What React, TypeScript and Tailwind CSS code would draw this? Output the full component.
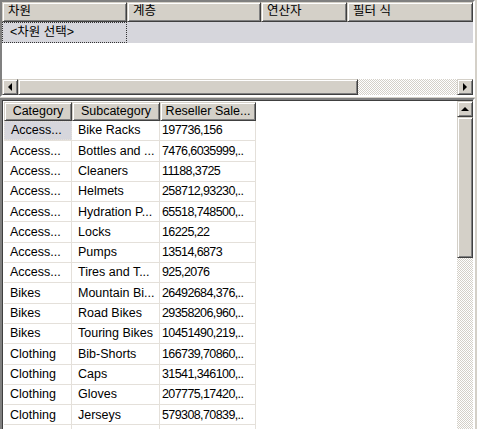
import React from 'react';

const raised =
  'border border-t-[#d4d0c8] border-l-[#d4d0c8] border-r-[#404040] border-b-[#404040] shadow-[inset_1px_1px_0_#ffffff,inset_-1px_-1px_0_#808080] bg-[#d4d0c8]';
const sunken =
  'border-2 border-t-[#808080] border-l-[#808080] border-r-[#ffffff] border-b-[#ffffff]';
const track =
  'bg-[repeating-conic-gradient(#d4d0c8_0_25%,#ffffff_0_50%)] [background-size:2px_2px]';

type Dir = 'left' | 'right' | 'up';

function Arrow({ dir }: { dir: Dir }) {
  const pts =
    dir === 'left' ? '5,0 5,8 1,4' : dir === 'right' ? '1,0 1,8 5,4' : '0,5 8,5 4,1';
  const w = dir === 'up' ? 8 : 6;
  const h = dir === 'up' ? 6 : 8;
  return (
    <div className={`${raised} w-[16px] h-[16px] flex items-center justify-center shrink-0`}>
      <svg width={w} height={h} viewBox={`0 0 ${w} ${h}`}>
        <polygon points={pts} fill="#000" />
      </svg>
    </div>
  );
}

const topCols = [
  { label: '차원', w: 'w-[125px]' },
  { label: '계층', w: 'w-[134px]' },
  { label: '연산자', w: 'w-[86px]' },
  { label: '필터 식', w: 'flex-1' },
];

const rows: [string, string, string][] = [
  ['Access...', 'Bike Racks', '197736,156'],
  ['Access...', 'Bottles and ...', '7476,6035999,..'],
  ['Access...', 'Cleaners', '11188,3725'],
  ['Access...', 'Helmets', '258712,93230,..'],
  ['Access...', 'Hydration P...', '65518,748500,..'],
  ['Access...', 'Locks', '16225,22'],
  ['Access...', 'Pumps', '13514,6873'],
  ['Access...', 'Tires and T...', '925,2076'],
  ['Bikes', 'Mountain Bi...', '26492684,376,..'],
  ['Bikes', 'Road Bikes', '29358206,960,..'],
  ['Bikes', 'Touring Bikes', '10451490,219,..'],
  ['Clothing', 'Bib-Shorts', '166739,70860,..'],
  ['Clothing', 'Caps', '31541,346100,..'],
  ['Clothing', 'Gloves', '207775,17420,..'],
  ['Clothing', 'Jerseys', '579308,70839,..'],
  ['', '', ''],
];

function TopPanel() {
  return (
    <div className={`${sunken} w-[475px] h-[97px] shadow-[inset_1px_1px_0_#404040] bg-white flex flex-col`}>
      <div className="flex h-[20px] shrink-0">
        {topCols.map((c) => (
          <div key={c.label} className={`${raised} ${c.w} h-full flex items-center px-[5px] pb-[1px] whitespace-nowrap`}>
            {c.label}
          </div>
        ))}
      </div>
      <div className="flex h-[21px] shrink-0 bg-[#d6d6dc]">
        <div className="w-[125px] h-full border border-dotted border-[#333] flex items-center pl-[7px]">
          &lt;차원 선택&gt;
        </div>
      </div>
      <div className="flex-1 bg-white" />
      <div className="flex h-[16px] shrink-0">
        <Arrow dir="left" />
        <div className={`${raised} w-[340px] h-full`} />
        <div className={`flex-1 h-full ${track}`} />
        <Arrow dir="right" />
      </div>
    </div>
  );
}

function BottomPanel() {
  return (
    <div className={`${sunken} border-b-0 w-[475px] flex-1 shadow-[inset_1px_1px_0_#404040] bg-white flex overflow-hidden`}>
      <div className="flex-1 pl-[2px] pt-[2px] overflow-hidden">
        <div className="flex h-[19px]">
          <div className={`${raised} w-[68px] h-full flex items-center justify-center`}>Category</div>
          <div className={`${raised} w-[88px] h-full flex items-center justify-center`}>Subcategory</div>
          <div className={`${raised} w-[96px] h-full flex items-center justify-center whitespace-nowrap`}>
            Reseller Sale...
          </div>
        </div>
        {rows.map((r, i) => (
          <div key={i} className="flex h-[20.3px] border-b border-[#e4e0da] w-[252px]">
            <div
              className={`w-[68px] h-full flex items-center pl-[6px] border-r border-[#e4e0da] whitespace-nowrap ${
                i === 0 ? 'bg-[#d6d6dc] border border-dotted border-[#333]' : ''
              }`}
            >
              {r[0]}
            </div>
            <div className="w-[88px] h-full flex items-center pl-[6px] border-r border-[#e4e0da] whitespace-nowrap">
              {r[1]}
            </div>
            <div className="w-[96px] h-full flex items-center pl-[2px] border-r border-[#e4e0da] whitespace-nowrap tracking-[-0.6px]">
              {r[2]}
            </div>
          </div>
        ))}
      </div>
      <div className="w-[16px] flex flex-col shrink-0 mt-[1px]">
        <Arrow dir="up" />
        <div className={`${raised} h-[141px] w-full shrink-0`} />
        <div className={`flex-1 w-full ${track}`} />
      </div>
    </div>
  );
}

export default function App() {
  return (
    <div
      className="w-[477px] h-[429px] bg-[#d4d0c8] overflow-hidden flex flex-col gap-[1px] text-[12.5px] text-black leading-none"
      style={{ fontFamily: '"Liberation Sans", "Noto Sans CJK KR", sans-serif' }}
    >
      <TopPanel />
      <BottomPanel />
    </div>
  );
}
